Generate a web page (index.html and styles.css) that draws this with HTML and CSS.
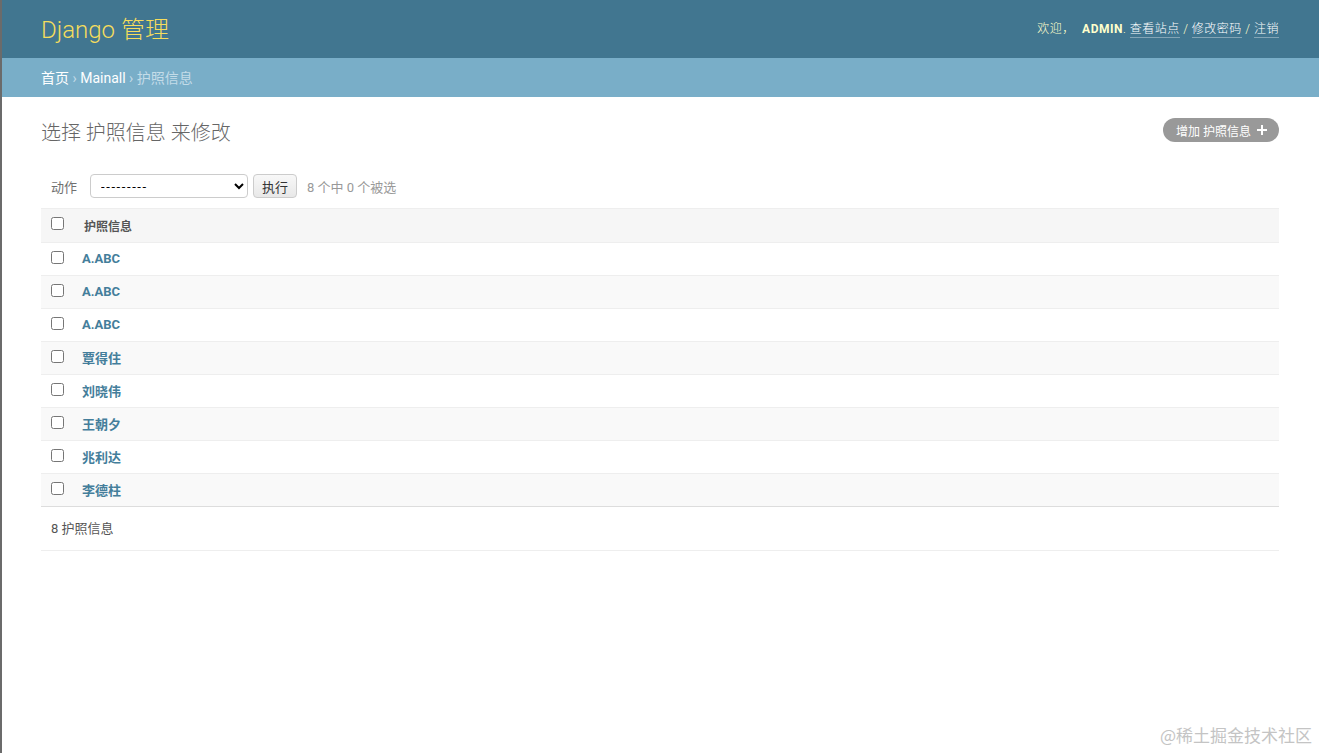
FILE: index.html
```html
<!DOCTYPE html>
<html lang="zh-CN">
<head>
<meta charset="utf-8">
<title>选择 护照信息 来修改 | Django 站点管理员</title>
<link rel="stylesheet" href="styles.css">
</head>
<body>
<div class="header">
  <div class="branding">Django 管理</div>
  <div class="user-tools">欢迎， <strong>admin</strong>. <a href="#">查看站点</a> / <a href="#">修改密码</a> / <a href="#">注销</a></div>
</div>
<div class="breadcrumbs"><a href="#">首页</a> › <a href="#">Mainall</a> › 护照信息</div>
<div class="content">
  <div class="title-row">
    <h1>选择 护照信息 来修改</h1>
    <a class="addlink" href="#">增加 护照信息 <svg width="10" height="10" viewBox="0 0 10 10"><path d="M4 0h2v4h4v2H6v4H4V6H0V4h4z" fill="#fff"/></svg></a>
  </div>
  <div class="actions">
    <span class="label">动作</span>
    <select class="sel"><option>---------</option></select>
    <button class="go">执行</button>
    <span class="counter">8 个中 0 个被选</span>
  </div>
  <table class="results">
    <thead>
      <tr><th class="cb"><input type="checkbox"></th><th>护照信息</th></tr>
    </thead>
    <tbody>
      <tr class="r1"><td class="cb"><input type="checkbox"></td><td><a href="#">A.ABC</a></td></tr>
      <tr class="r2"><td class="cb"><input type="checkbox"></td><td><a href="#">A.ABC</a></td></tr>
      <tr class="r1"><td class="cb"><input type="checkbox"></td><td><a href="#">A.ABC</a></td></tr>
      <tr class="r2"><td class="cb"><input type="checkbox"></td><td><a href="#">覃得住</a></td></tr>
      <tr class="r1"><td class="cb"><input type="checkbox"></td><td><a href="#">刘晓伟</a></td></tr>
      <tr class="r2"><td class="cb"><input type="checkbox"></td><td><a href="#">王朝夕</a></td></tr>
      <tr class="r1"><td class="cb"><input type="checkbox"></td><td><a href="#">兆利达</a></td></tr>
      <tr class="r2"><td class="cb"><input type="checkbox"></td><td><a href="#">李德柱</a></td></tr>
    </tbody>
  </table>
  <div class="paginator">8 护照信息</div>
</div>
<div class="watermark">@稀土掘金技术社区</div>
</body>
</html>
```
FILE: styles.css
```css
html, body {
  margin: 0;
  padding: 0;
}
body {
  font-family: Roboto, "Noto Sans CJK SC", "Liberation Sans", sans-serif;
  color: #333;
  background: #fff;
  border-left: 2px solid #6b6b6b;
  min-height: 753px;
  box-sizing: border-box;
  position: relative;
}
a { text-decoration: none; }

.header {
  background: #417690;
  height: 58px;
  padding: 0 40px 0 39px;
  display: flex;
  align-items: center;
  justify-content: space-between;
  box-sizing: border-box;
}
.branding {
  color: #f5dd5d;
  font-size: 24px;
  font-weight: 300;
  margin-top: -3px;
}
.user-tools {
  color: #ffc;
  font-size: 12px;
  letter-spacing: 0.5px;
  font-weight: 300;
  margin-top: -3px;
}
.user-tools strong {
  text-transform: uppercase;
  font-weight: 700;
  margin-left: 4px;
}
.user-tools a {
  color: #fff;
  border-bottom: 1px solid rgba(255,255,255,0.35);
  padding-bottom: 1px;
}

.breadcrumbs {
  background: #79aec8;
  height: 39px;
  line-height: 40px;
  padding: 0 39px;
  font-size: 14px;
  color: #c4dce8;
  box-sizing: border-box;
}
.breadcrumbs a {
  color: #fff;
}

.content {
  padding: 20px 40px 20px 39px;
}
.title-row {
  display: flex;
  justify-content: space-between;
  align-items: flex-start;
  height: 47px;
}
h1 {
  margin: 0;
  font-size: 20px;
  font-weight: 300;
  color: #666;
}
.addlink {
  display: flex;
  align-items: center;
  gap: 6px;
  background: #999;
  color: #fff;
  font-size: 12px;
  height: 24px;
  padding: 0 12px 0 13px;
  border-radius: 12px;
  margin-top: 1px;
}

.actions {
  display: flex;
  align-items: center;
  height: 45px;
  padding: 0 10px;
  font-size: 13px;
  border-bottom: 1px solid #eee;
  box-sizing: border-box;
}
.actions .label {
  color: #707070;
  margin-right: 13px;
}
.sel {
  width: 158px;
  height: 24px;
  border: 1px solid #ccc;
  border-radius: 4px;
  background: #fff;
  font-size: 13px;
  padding: 0 6px;
  font-family: inherit;
  color: #000;
  letter-spacing: 1.6px;
}
.go {
  margin-left: 5px;
  height: 24px;
  width: 44px;
  border: 1px solid #ccc;
  border-radius: 4px;
  background: linear-gradient(#f8f8f8, #e8e8e8);
  font-size: 13px;
  font-family: inherit;
  color: #333;
  padding: 0;
}
.counter {
  color: #999;
  margin-left: 10px;
}

.results {
  width: 100%;
  border-collapse: collapse;
  font-size: 13px;
}
.results th, .results td {
  height: 33px;
  padding: 0 8px 0 2px;
  text-align: left;
  border-bottom: 1px solid #eee;
  box-sizing: border-box;
}
.results thead th {
  background: #f6f6f6;
  color: #555;
  font-size: 12px;
  font-weight: 700;
  height: 33px;
}
.results .cb {
  width: 39px;
  padding-left: 10px;
}
.results th.cb + th { padding-left: 4px; }
.results input[type=checkbox] {
  margin: 0;
  width: 13px;
  height: 13px;
  position: relative;
  top: 0;
}
.results tbody tr.r2 td { background: #f9f9f9; }
.results tbody td a {
  color: #447e9b;
  font-weight: 700;
}
.results tbody tr:last-child td {
  border-bottom: 1px solid #ddd;
}

.paginator {
  height: 43px;
  line-height: 43px;
  padding: 0 10px;
  font-size: 13px;
  color: #555;
  border-bottom: 1px solid #eee;
}

.watermark {
  position: absolute;
  right: 7px;
  bottom: 6px;
  font-size: 17px;
  color: #c4c4c4;
  font-family: "Noto Sans CJK SC", sans-serif;
}
```
